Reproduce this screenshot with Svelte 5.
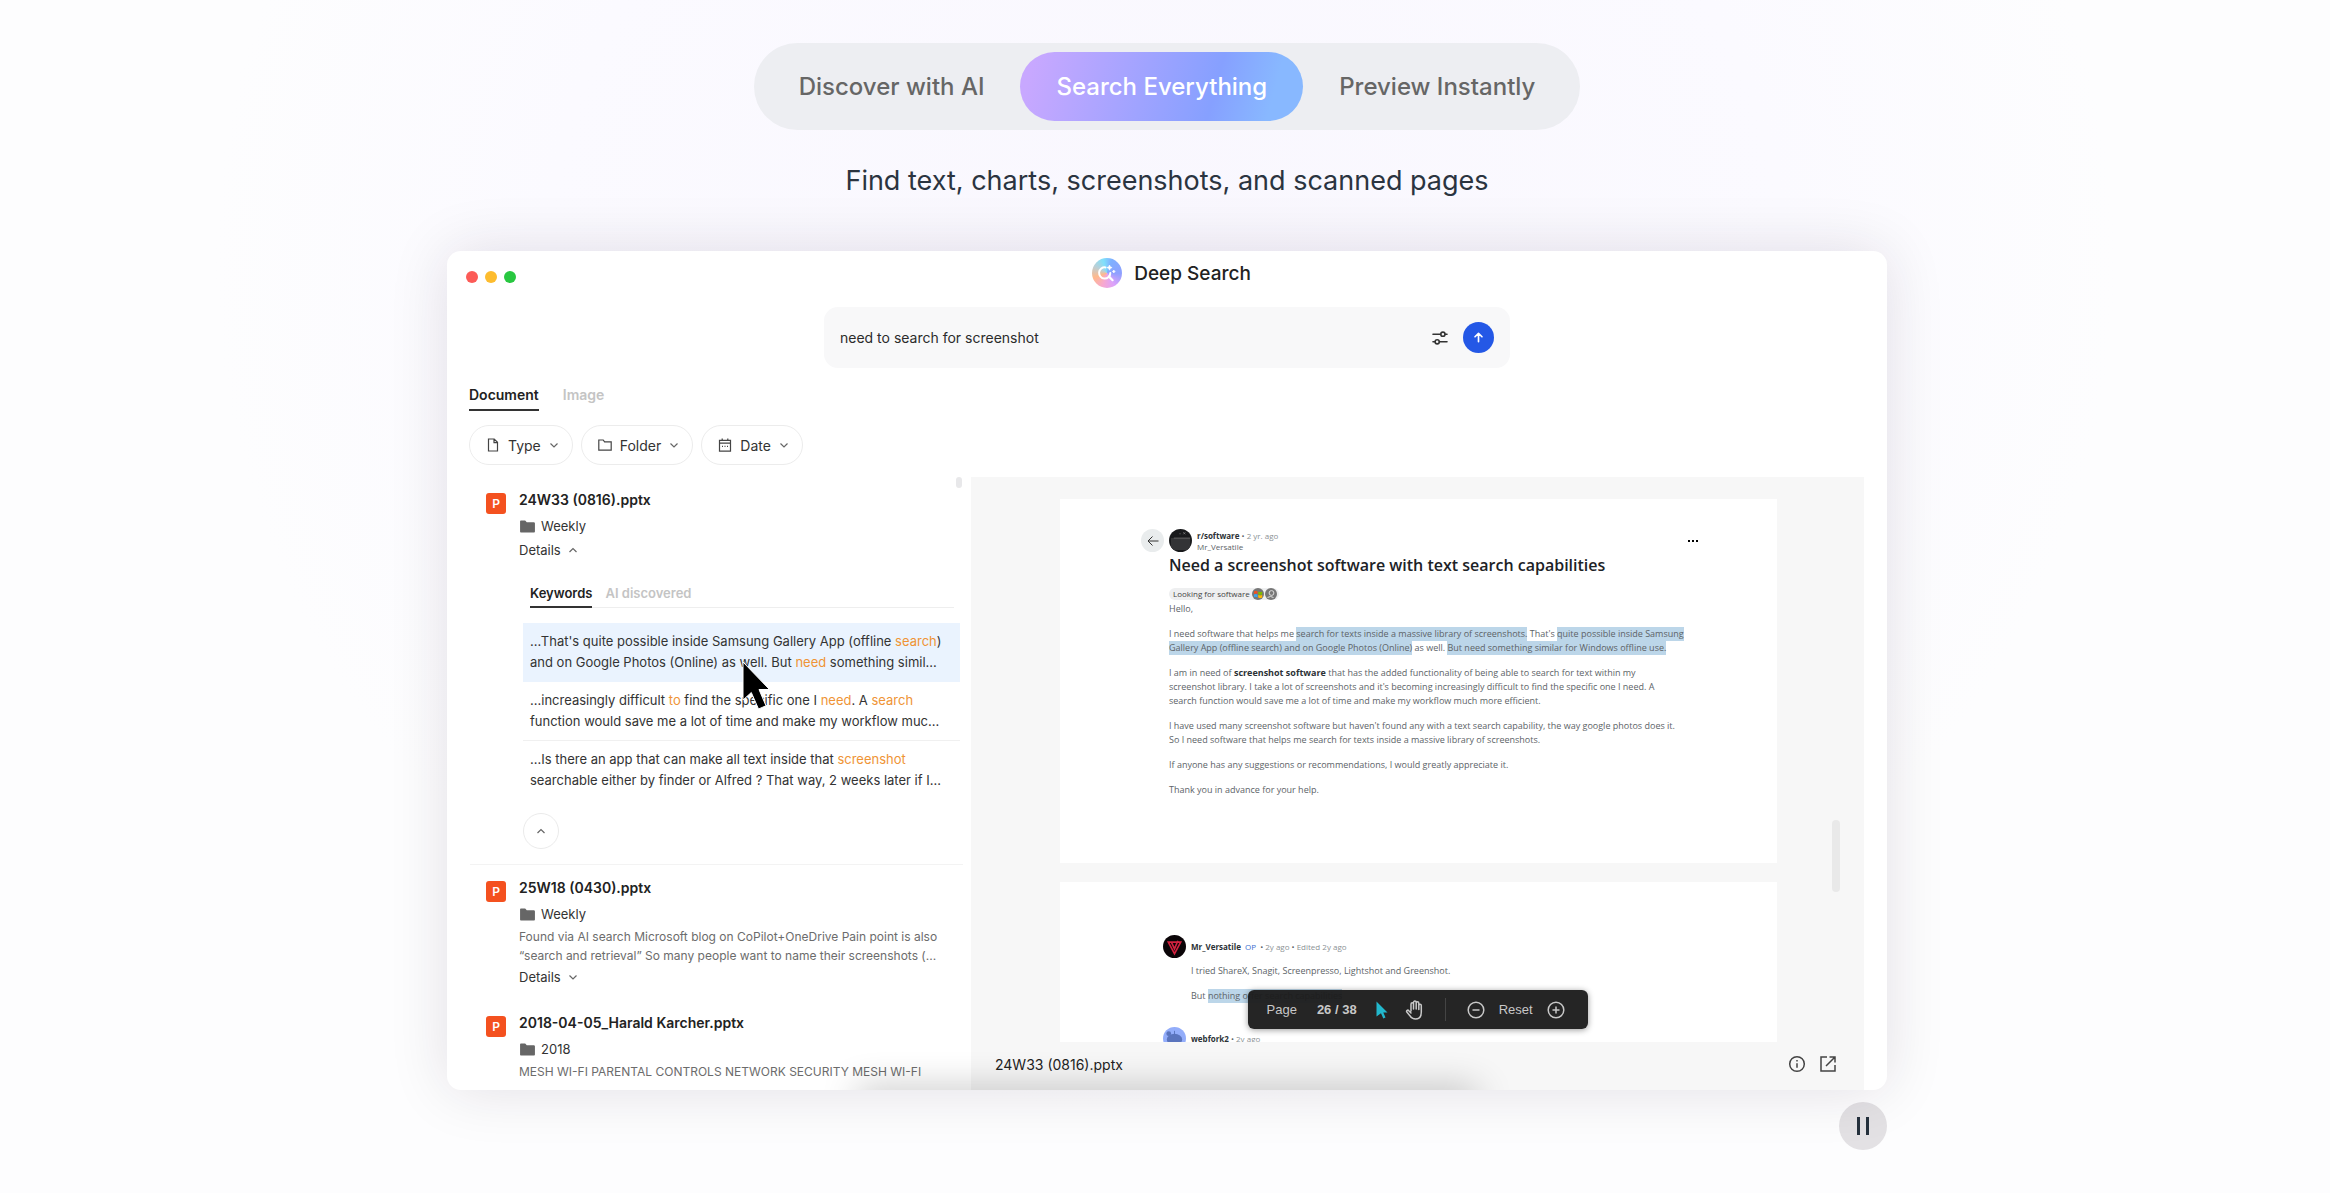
<script lang="ts">
  type Segment = { text: string; mark?: boolean; strong?: boolean }

  interface FileResult {
    name: string
    folder: string
    open?: boolean
    excerpt?: string[]
    toggle?: boolean
  }

  const modes = ['Discover with AI', 'Search Everything', 'Preview Instantly']
  const kinds = ['Document', 'Image']
  const lights = ['red', 'yellow', 'green']

  let mode = $state('Search Everything')
  let kind = $state('Document')
  let hitTab = $state('Keywords')
  let query = $state('need to search for screenshot')

  const results: FileResult[] = [
    { name: '24W33 (0816).pptx', folder: 'Weekly', open: true, toggle: true },
    {
      name: '25W18 (0430).pptx',
      folder: 'Weekly',
      toggle: true,
      excerpt: [
        'Found via AI search Microsoft blog on CoPilot+OneDrive Pain point is also',
        '“search and retrieval” So many people want to name their screenshots (...',
      ],
    },
    {
      name: '2018-04-05_Harald Karcher.pptx',
      folder: '2018',
      excerpt: ['MESH WI-FI PARENTAL CONTROLS NETWORK SECURITY MESH WI-FI'],
    },
  ]

  const hits: Segment[][][] = [
    [
      [{ text: "...That's quite possible inside Samsung Gallery App (offline " }, { text: 'search', mark: true }, { text: ')' }],
      [{ text: 'and on Google Photos (Online) as well. But ' }, { text: 'need', mark: true }, { text: ' something simil...' }],
    ],
    [
      [
        { text: '...increasingly difficult ' },
        { text: 'to', mark: true },
        { text: ' find the specific one I ' },
        { text: 'need', mark: true },
        { text: '. A ' },
        { text: 'search', mark: true },
      ],
      [{ text: 'function would save me a lot of time and make my workflow muc...' }],
    ],
    [
      [{ text: '...Is there an app that can make all text inside that ' }, { text: 'screenshot', mark: true }],
      [{ text: 'searchable either by finder or Alfred ? That way, 2 weeks later if I...' }],
    ],
  ]

  const post: Segment[][][] = [
    [
      [
        { text: 'I need software that helps me ' },
        { text: 'search for texts inside a massive library of screenshots.', mark: true },
        { text: " That's " },
        { text: 'quite possible inside Samsung', mark: true },
      ],
      [
        { text: 'Gallery App (offline search) and on Google Photos (Online)', mark: true },
        { text: ' as well. ' },
        { text: 'But need something similar for Windows offline use.', mark: true },
      ],
    ],
    [
      [
        { text: 'I am in need of ' },
        { text: 'screenshot software', strong: true },
        { text: ' that has the added functionality of being able to search for text within my' },
      ],
      [{ text: "screenshot library. I take a lot of screenshots and it's becoming increasingly difficult to find the specific one I need. A" }],
      [{ text: 'search function would save me a lot of time and make my workflow much more efficient.' }],
    ],
    [
      [{ text: "I have used many screenshot software but haven't found any with a text search capability, the way google photos does it." }],
      [{ text: 'So I need software that helps me search for texts inside a massive library of screenshots.' }],
    ],
    [[{ text: 'If anyone has any suggestions or recommendations, I would greatly appreciate it.' }]],
    [[{ text: 'Thank you in advance for your help.' }]],
  ]
</script>

{#snippet chevron(up: boolean)}
  <svg class="chevron" viewBox="0 0 10 10" aria-hidden="true">
    <path d={up ? 'M1.5 7 5 3.5 8.5 7' : 'M1.5 3.5 5 7l3.5-3.5'} />
  </svg>
{/snippet}

{#snippet line(segments: Segment[])}
  <span class="line">{#each segments as s}{#if s.mark}<mark>{s.text}</mark>{:else if s.strong}<strong>{s.text}</strong>{:else}{s.text}{/if}{/each}</span>
{/snippet}

<main class="page">
  <nav class="modes">
    {#each modes as m}
      <button class:active={mode === m} onclick={() => (mode = m)}>{m}</button>
    {/each}
  </nav>
  <p class="tagline">Find text, charts, screenshots, and scanned pages</p>

  <div class="stage">
    <section class="window">
      <header class="titlebar">
        <div class="lights">
          {#each lights as l}
            <i class={l}></i>
          {/each}
        </div>
        <h1>
          <span class="logo">
            <svg viewBox="0 0 30 30" fill="none" stroke="#fff" aria-hidden="true">
              <path d="M13.500 9.400a5.600 5.600 0 1 0 4.800 5.500" stroke-width="2" stroke-linecap="round" />
              <path d="m17 18.600 3.600 3.600" stroke-width="2.200" stroke-linecap="round" />
              <path d="M17.500 7l.8 1.800 1.800.8-1.800.8-.8 1.800-.8-1.800-1.800-.8 1.800-.8zM21.800 12l.5 1 1 .5-1 .5-.5 1-.5-1-1-.5 1-.5z" fill="#fff" stroke-width=".6" />
            </svg>
          </span>
          Deep Search
        </h1>
      </header>

      <form class="search" onsubmit={(e) => e.preventDefault()}>
        <input type="text" aria-label="Search" bind:value={query} />
        <button type="button" class="tune" aria-label="Filters">
          <svg viewBox="0 0 18 18" fill="none" stroke="#333" stroke-width="1.6" stroke-linecap="round" aria-hidden="true">
            <path d="M2 5.200h7.600M14.200 5.200H16M2 12.800h2M8.400 12.800H16" />
            <circle cx="11.9" cy="5.2" r="2.1" />
            <circle cx="6.2" cy="12.8" r="2.1" />
          </svg>
        </button>
        <button class="send" aria-label="Search now">
          <svg viewBox="0 0 12 12" fill="none" stroke="#fff" stroke-width="1.8" stroke-linecap="round" stroke-linejoin="round" aria-hidden="true">
            <path d="M6 10.500v-9M2.200 5.200 6 1.500l3.800 3.700" />
          </svg>
        </button>
      </form>

      <div class="kinds">
        {#each kinds as k}
          <button class:active={kind === k} onclick={() => (kind = k)}>{k}</button>
        {/each}
      </div>

      <div class="filters">
        <button>
          <svg viewBox="0 0 14 14" aria-hidden="true"><path d="M2.500 1h5.700l3.300 3.300V13h-9zM8 1v3.600h3.500" /></svg>
          Type {@render chevron(false)}
        </button>
        <button>
          <svg viewBox="0 0 14 14" aria-hidden="true"><path d="M.8 2h4.400l1.400 1.800h6.600v8.400H.8z" /></svg>
          Folder {@render chevron(false)}
        </button>
        <button>
          <svg viewBox="0 0 14 14" aria-hidden="true"><path d="M1.500 2.400h11v10.800h-11zM1.500 5.200h11M4.200.6v1.800M9.800.6v1.800M4 8.300h1M6.500 8.300h1M9 8.300h1" /></svg>
          Date {@render chevron(false)}
        </button>
      </div>

      <div class="panes">
        <div class="results">
          <div class="thumb"></div>
          {#each results as r}
            <article class:open={r.open}>
              <span class="ppt">P</span>
              <div class="info">
                <h2>{r.name}</h2>
                <div class="folder">
                  <svg viewBox="0 0 16 14" aria-hidden="true"><path d="M0 1.500C0 .8.5.5 1.200.5h4.300l1.700 1.800h7.300c.8 0 1.500.5 1.500 1.200v8.800c0 .7-.5 1.200-1.200 1.200H1.200C.5 13.500 0 13 0 12.300z" fill="#666" /></svg>
                  {r.folder}
                </div>
                {#if r.excerpt}
                  <p class="excerpt">
                    {#each r.excerpt as e}<span class="line">{e}</span>{/each}
                  </p>
                {/if}
                {#if r.toggle}
                  <button class="details">Details {@render chevron(!!r.open)}</button>
                {/if}
                {#if r.open}
                  <div class="hits">
                    <div class="hit-tabs">
                      {#each ['Keywords', 'AI discovered'] as t}
                        <button class:active={hitTab === t} onclick={() => (hitTab = t)}>{t}</button>
                      {/each}
                    </div>
                    {#each hits as hit, i}
                      <p class="hit" class:selected={i === 0}>
                        {#each hit as l}{@render line(l)}{/each}
                      </p>
                    {/each}
                    <button class="collapse" aria-label="Collapse">{@render chevron(true)}</button>
                  </div>
                {/if}
              </div>
            </article>
          {/each}
        </div>

        <div class="preview">
          <div class="sheets">
            <div class="sheet first">
              <div class="post-head">
                <button class="back" aria-label="Back">
                  <svg viewBox="0 0 12 12" fill="none" stroke="#333" aria-hidden="true"><path d="M11.500 6H1M5.500 1.500 1 6l4.500 4.500" /></svg>
                </button>
                <span class="avatar">
                  <svg viewBox="0 0 24 24" aria-hidden="true">
                    <rect width="24" height="24" fill="#191a1c" />
                    <path d="M2 9.500h20V22H2z" fill="#333436" />
                    <path d="M5 9.500h17" stroke="#666" />
                    <path d="M11 5h1M15 3.500l2 2m0-2-2 2" stroke="#777" />
                  </svg>
                </span>
                <div class="byline">
                  <div><strong>r/software</strong> • <span>2 yr. ago</span></div>
                  <div>Mr_Versatile</div>
                </div>
                <svg class="more" viewBox="0 0 10 4" aria-hidden="true"><path d="M0 1h2v2H0zM4 1h2v2H4zM8 1h2v2H8z" /></svg>
              </div>
              <div class="post">
                <h3>Need a screenshot software with text search capabilities</h3>
                <div class="tag">
                  Looking for software
                  <svg viewBox="0 0 25 12" aria-hidden="true">
                    <circle cx="6" cy="6" r="6" fill="#777" />
                    <path d="M2 3.500q2-1.500 3.500 0V6Q4 5 2 6z" fill="#f25022" />
                    <path d="M6.200 3.500q2 1 4 0v3q-2 .8-4 0z" fill="#7fba00" />
                    <path d="M2 6.600q2-1 3.500 0v2.800Q4 8.500 2 9z" fill="#39a5ef" />
                    <path d="M6.200 7q2 .8 4 0v2.500q-2 1-4 0z" fill="#ffb900" />
                    <circle cx="19" cy="6" r="6" fill="#777" />
                    <circle cx="19.500" cy="5" r="2.400" fill="none" stroke="#ddd" />
                    <path d="M15.500 9.500q3-2 6 0" fill="none" stroke="#ddd" />
                  </svg>
                </div>
                <p>Hello,</p>
                {#each post as para}
                  <p>{#each para as l}{@render line(l)}{/each}</p>
                {/each}
              </div>
            </div>

            <div class="sheet second">
              <div class="comment-head">
                <span class="avatar">
                  <svg viewBox="0 0 24 24" aria-hidden="true">
                    <rect width="24" height="24" fill="#0b0508" />
                    <path d="M5.500 7.500h13L12 19.500zM9 8l3 6.500L15.500 6" fill="none" stroke="#d3213f" stroke-width="1.700" />
                  </svg>
                </span>
                <div><strong>Mr_Versatile</strong> <em>OP</em> • <span>2y ago</span> • <span>Edited 2y ago</span></div>
              </div>
              <p>I tried ShareX, Snagit, Screenpresso, Lightshot and Greenshot.</p>
              <p>But <mark>nothing offer search capabilities</mark></p>
              <div class="comment-head next">
                <span class="avatar">
                  <svg viewBox="0 0 24 24" aria-hidden="true">
                    <rect width="24" height="24" fill="#93adfa" />
                    <ellipse cx="12" cy="13" rx="8" ry="6" fill="#5a74bd" />
                    <circle cx="6" cy="7" r="2.500" fill="#5a74bd" />
                    <path d="M12 8V4" stroke="#5a74bd" />
                  </svg>
                </span>
                <div><strong>webfork2</strong> • <span>2y ago</span></div>
              </div>
            </div>
            <div class="scroll"></div>

            <div class="tools">
              <span>Page</span>
              <b>26 / 38</b>
              <button aria-label="Select">
                <svg class="pick" viewBox="0 0 12 18" aria-hidden="true"><path d="M.500.500 11.500 11.500H7.300L9.500 16.500 7.300 17.500 5 12.300.500 15.500z" fill="#22b8cd" /></svg>
              </button>
              <button aria-label="Pan">
                <svg class="hand" viewBox="0 0 20 20" fill="none" stroke="#c8c8c8" stroke-width="1.500" stroke-linecap="round" stroke-linejoin="round" aria-hidden="true">
                  <path d="M6 11V4.200c0-1.800 2.500-1.800 2.500 0V9M8.500 9V2.500c0-1.900 2.700-1.900 2.700 0V9M11.200 9V3.200c0-1.800 2.600-1.800 2.600 0V9.500M13.800 9.500V5.500c0-1.700 2.500-1.700 2.500 0V12c0 4.500-2 7-5.600 7-3 0-4.500-1-6-3.600L1.800 12c-.8-1.500 1-2.500 2-1.300L6 13" />
                </svg>
              </button>
              <i></i>
              <button aria-label="Zoom out">
                <svg class="round" viewBox="0 0 18 18" aria-hidden="true"><circle cx="9" cy="9" r="7.800" /><path d="M5.500 9h7" /></svg>
              </button>
              <button class="reset">Reset</button>
              <button aria-label="Zoom in">
                <svg class="round" viewBox="0 0 18 18" aria-hidden="true"><circle cx="9" cy="9" r="7.800" /><path d="M5.500 9h7M9 5.500v7" /></svg>
              </button>
            </div>
          </div>

          <footer>
            <span>24W33 (0816).pptx</span>
            <button aria-label="Info">
              <svg viewBox="0 0 18 18" aria-hidden="true"><circle cx="9" cy="9" r="7.300" /><path d="M9 8.200v4.600M9 5v1.600" /></svg>
            </button>
            <button aria-label="Open">
              <svg viewBox="0 0 18 18" aria-hidden="true"><path d="M8 2H2v14h14v-6M10.500 2H16v5.500M16 2 7 11" /></svg>
            </button>
          </footer>
        </div>
      </div>

      <div class="glow"></div>
      <svg class="pointer" viewBox="0 0 28 50" aria-hidden="true">
        <path d="M1 1v38l8.300-7.500L16.500 48l7.500-3.200L17 28.500h10.500z" fill="#000" stroke="#fff" stroke-width="1" />
      </svg>
    </section>

    <button class="pause" aria-label="Pause">
      <svg viewBox="0 0 14 18" aria-hidden="true"><path d="M1 0h3v18H1zM10 0h3v18h-3z" fill="#25313d" /></svg>
    </button>
  </div>
</main>

<style>
  :global(body) {
    margin: 0;
    background: #fdfdfe;
  }

  .page,
  .page button,
  .page input {
    font-family: Inter, 'Liberation Sans', sans-serif;
  }

  .page {
    display: flex;
    flex-direction: column;
    align-items: center;
    box-sizing: border-box;
    min-height: 100vh;
    padding: 43px 0 43px 4px;
    overflow: hidden;
    color: #222;
    background: radial-gradient(ellipse 950px 850px at 50% 22%, #f9f7fe, #fbfaff 65%, #fdfdfe);
  }

  button {
    padding: 0;
    border: 0;
    color: inherit;
    background: none;
    cursor: pointer;
  }

  svg {
    display: block;
  }

  p,
  h1,
  h2,
  h3 {
    margin: 0;
  }

  mark {
    color: inherit;
    background: none;
  }

  .line {
    display: block;
    white-space: nowrap;
  }

  .modes {
    display: flex;
    padding: 9px;
    border-radius: 44px;
    background: #edeef2;
  }

  .modes button {
    height: 69px;
    padding: 0 36px;
    border-radius: 35px;
    font-size: 24px;
    font-weight: 500;
    color: #666;
  }

  .modes .active {
    color: #fff;
    background: linear-gradient(105deg, #c8a8ff 5%, #86a0ff 68%, #88b8ff 88%);
  }

  .tagline {
    margin-top: 33px;
    font-size: 27px;
    line-height: 36px;
    color: #2b3440;
  }

  .stage {
    display: flex;
    flex-direction: column;
    gap: 12px;
    width: 1440px;
    max-width: 100%;
    margin-top: 52px;
  }

  .window {
    position: relative;
    display: flex;
    flex-direction: column;
    height: 839px;
    overflow: hidden;
    border-radius: 14px;
    background: #fff;
    box-shadow: 0 0 60px rgba(30, 20, 40, 0.12);
  }

  .titlebar {
    display: grid;
    grid-template-columns: 1fr auto 1fr;
    align-items: center;
    height: 44px;
    padding: 0 10px 0 19px;
  }

  .lights {
    display: flex;
    gap: 7px;
    padding-top: 7px;
  }

  .lights i {
    width: 12px;
    height: 12px;
    border-radius: 50%;
  }

  .red {
    background: #fc5b57;
  }

  .yellow {
    background: #fdbc2e;
  }

  .green {
    background: #28c740;
  }

  h1 {
    display: flex;
    align-items: center;
    gap: 12px;
    font-size: 19px;
    font-weight: 500;
  }

  .logo {
    width: 30px;
    height: 30px;
    border-radius: 50%;
    background: conic-gradient(from 20deg, #7fb0ff, #8fa0ff 20%, #dda2fa 36%, #f7a8cf 50%, #ffb98c 64%, #b9d0d8 78%, #7fe0fb 90%, #7fb0ff);
  }

  .search {
    display: flex;
    align-items: center;
    gap: 14px;
    align-self: center;
    box-sizing: border-box;
    width: 686px;
    height: 61px;
    margin-top: 12px;
    padding: 0 16px;
    border-radius: 14px;
    background: #f8f8f9;
  }

  .search input {
    flex: 1;
    padding: 0;
    border: 0;
    outline: 0;
    font-size: 14px;
    color: #2b2b2b;
    background: none;
  }

  .tune svg {
    width: 18px;
    height: 18px;
  }

  .send {
    display: grid;
    place-items: center;
    width: 31px;
    height: 31px;
    border-radius: 50%;
    background: #2458e6;
  }

  .send svg {
    width: 11px;
    height: 11px;
  }

  .kinds {
    display: flex;
    gap: 24px;
    margin-top: 12px;
    padding: 0 22px;
  }

  .kinds button {
    height: 31px;
    border-bottom: 2px solid transparent;
    font-size: 14px;
    font-weight: 600;
    color: #c4c4c4;
  }

  .kinds .active,
  .hit-tabs .active {
    border-color: #333;
    color: #222;
  }

  .filters {
    display: flex;
    gap: 8px;
    margin-top: 14px;
    padding: 0 22px;
  }

  .filters button {
    display: flex;
    align-items: center;
    gap: 8px;
    height: 40px;
    padding: 0 13px 0 16px;
    border: 1px solid #ececec;
    border-radius: 20px;
    font-size: 14px;
    color: #333;
  }

  .filters svg {
    width: 14px;
    height: 14px;
    fill: none;
    stroke: #444;
    stroke-width: 1.2;
  }

  .page .chevron {
    width: 10px;
    height: 10px;
    fill: none;
    stroke: #666;
    stroke-width: 1.2;
  }

  .panes {
    display: flex;
    flex: 1;
    min-height: 0;
    margin-top: 12px;
    padding-right: 23px;
  }

  .results {
    position: relative;
    flex: none;
    width: 524px;
    overflow: hidden;
  }

  .thumb {
    position: absolute;
    top: 0;
    right: 9px;
    width: 6px;
    height: 11px;
    border-radius: 3px;
    background: #e8e8ea;
  }

  article {
    display: flex;
    gap: 13px;
    height: 135px;
    margin: 0 8px 0 23px;
    padding: 16px 3px 0 16px;
    box-sizing: border-box;
  }

  article.open {
    height: 388px;
    border-bottom: 1px solid #f3f3f3;
  }

  .ppt {
    flex: none;
    display: grid;
    place-items: center;
    width: 20px;
    height: 21px;
    border-radius: 3px;
    font-size: 12px;
    font-weight: 600;
    color: #fff;
    background: #f4511f;
  }

  .info {
    flex: 1;
    margin-top: -3px;
  }

  h2 {
    font-size: 14px;
    line-height: 20px;
    font-weight: 600;
  }

  .folder {
    display: flex;
    align-items: center;
    gap: 6px;
    height: 20px;
    margin-top: 6px;
    padding-left: 1px;
    font-size: 13px;
    color: #333;
  }

  .folder svg {
    width: 15px;
    height: 13px;
  }

  .excerpt {
    margin: 3px 0 2px;
    font-size: 12px;
    line-height: 19px;
    color: #6c6c6c;
  }

  .details {
    display: flex;
    align-items: center;
    gap: 7px;
    height: 20px;
    font-size: 13px;
    color: #333;
  }

  .open .details {
    margin-top: 4px;
  }

  .hits {
    margin: 20px 0 0 4px;
  }

  .hit-tabs {
    display: flex;
    gap: 13px;
    margin: 0 6px 15px 7px;
    border-bottom: 1px solid #eee;
  }

  .hit-tabs button {
    height: 28px;
    margin-bottom: -1px;
    border-bottom: 2px solid transparent;
    font-size: 13px;
    font-weight: 600;
    color: #c4c4c4;
  }

  .hit {
    padding: 8px 7px;
    border-bottom: 1px solid #f0f0f0;
    font-size: 13px;
    line-height: 21px;
    color: #333;
  }

  .hit:nth-of-type(3) {
    border: 0;
  }

  .hit mark {
    color: #ef9435;
  }

  .selected {
    border-color: #eaf3fe;
    background: #eaf3fe;
  }

  .collapse {
    display: grid;
    place-items: center;
    width: 36px;
    height: 36px;
    margin-top: 14px;
    border: 1px solid #ebebeb;
    border-radius: 50%;
  }

  .preview {
    display: flex;
    flex: 1;
    flex-direction: column;
    min-width: 0;
    background: #f7f7f7;
  }

  .sheets {
    position: relative;
    display: flex;
    flex: 1;
    flex-direction: column;
    gap: 19px;
    min-height: 0;
    padding: 22px 87px 0 89px;
    overflow: hidden;
    font-family: 'Open Sans', 'Noto Sans', sans-serif;
    font-size: 9px;
    line-height: 14px;
    color: #5c6367;
  }

  .sheet {
    flex: none;
    box-sizing: border-box;
    background: #fff;
  }

  .first {
    height: 364px;
    padding: 30px 79px 0 81px;
  }

  .second {
    height: 160px;
    padding: 53px 103px 0 131px;
    overflow: hidden;
  }

  .sheet strong {
    font-weight: 700;
    color: #2c3236;
  }

  .sheet mark {
    padding: 0 0 1px;
    background: #bcd6e9;
  }

  .post-head,
  .comment-head {
    display: flex;
    align-items: center;
    gap: 5px;
    font-size: 8px;
  }

  .back {
    display: grid;
    place-items: center;
    width: 23px;
    height: 23px;
    border-radius: 50%;
    background: #e9eced;
  }

  .back svg {
    width: 12px;
    height: 12px;
  }

  .avatar {
    flex: none;
    width: 23px;
    height: 23px;
    overflow: hidden;
    border-radius: 50%;
  }

  .byline {
    flex: 1;
    line-height: 11px;
  }

  .byline span,
  .comment-head span {
    color: #8b9295;
  }

  .more {
    width: 10px;
    height: 4px;
  }

  .post {
    padding-left: 28px;
  }

  h3 {
    font-size: 16px;
    line-height: 27px;
    font-weight: 600;
    white-space: nowrap;
    color: #1c2226;
  }

  .tag {
    display: flex;
    align-items: center;
    gap: 2px;
    width: fit-content;
    height: 12px;
    margin: 9px 0 2px;
    padding: 0 2px 0 4px;
    border-radius: 6px;
    font-size: 8px;
    color: #444;
    background: #eeeff0;
  }

  .tag svg {
    width: 25px;
    height: 12px;
  }

  .post p + p {
    margin-top: 11px;
  }

  .comment-head {
    margin: 0 0 6px -28px;
  }

  .comment-head em {
    padding: 0 2px;
    font-style: normal;
    color: #3d6fd0;
  }

  .second p + p {
    margin-top: 11px;
  }

  .second .next {
    margin-top: 24px;
  }

  .scroll {
    position: absolute;
    top: 343px;
    right: 24px;
    width: 8px;
    height: 72px;
    border-radius: 4px;
    background: #e9e9e9;
  }

  .tools {
    position: absolute;
    bottom: 13px;
    left: 50%;
    display: flex;
    align-items: center;
    width: 340px;
    height: 39px;
    margin-left: -170px;
    padding: 0 19px;
    box-sizing: border-box;
    border-radius: 6px;
    font-family: 'Liberation Sans', Arial, sans-serif;
    font-size: 13px;
    color: #c8c8c8;
    background: rgba(28, 28, 28, 0.96);
    box-shadow: 0 1px 6px rgba(0, 0, 0, 0.4);
  }

  .tools b {
    margin: 0 19px 0 20px;
  }

  .tools i {
    width: 1px;
    height: 23px;
    margin: 0 21px 0 20px;
    background: #444;
  }

  .tools .reset {
    margin: 0 14px;
    font-family: inherit;
    font-size: 13px;
  }

  .pick {
    width: 12px;
    height: 18px;
    margin-right: 17px;
  }

  .hand {
    width: 20px;
    height: 20px;
  }

  .round {
    width: 18px;
    height: 18px;
    fill: none;
    stroke: #c8c8c8;
    stroke-width: 1.5;
  }

  footer {
    display: flex;
    align-items: center;
    gap: 13px;
    height: 48px;
    padding: 0 27px 4px 24px;
    box-sizing: border-box;
  }

  footer span {
    flex: 1;
    font-size: 14px;
  }

  footer svg {
    width: 18px;
    height: 18px;
    fill: none;
    stroke: #444;
    stroke-width: 1.5;
  }

  .glow {
    position: absolute;
    bottom: -20px;
    left: 50%;
    width: 620px;
    height: 20px;
    margin-left: -310px;
    box-shadow: 0 0 36px rgba(0, 0, 0, 0.3);
  }

  .pointer {
    position: absolute;
    top: 410px;
    left: 295px;
    width: 28px;
    height: 50px;
  }

  .pause {
    display: grid;
    place-items: center;
    align-self: flex-end;
    width: 48px;
    height: 48px;
    border-radius: 50%;
    background: #e3e1e4;
  }

  .pause svg {
    width: 14px;
    height: 18px;
  }
</style>
